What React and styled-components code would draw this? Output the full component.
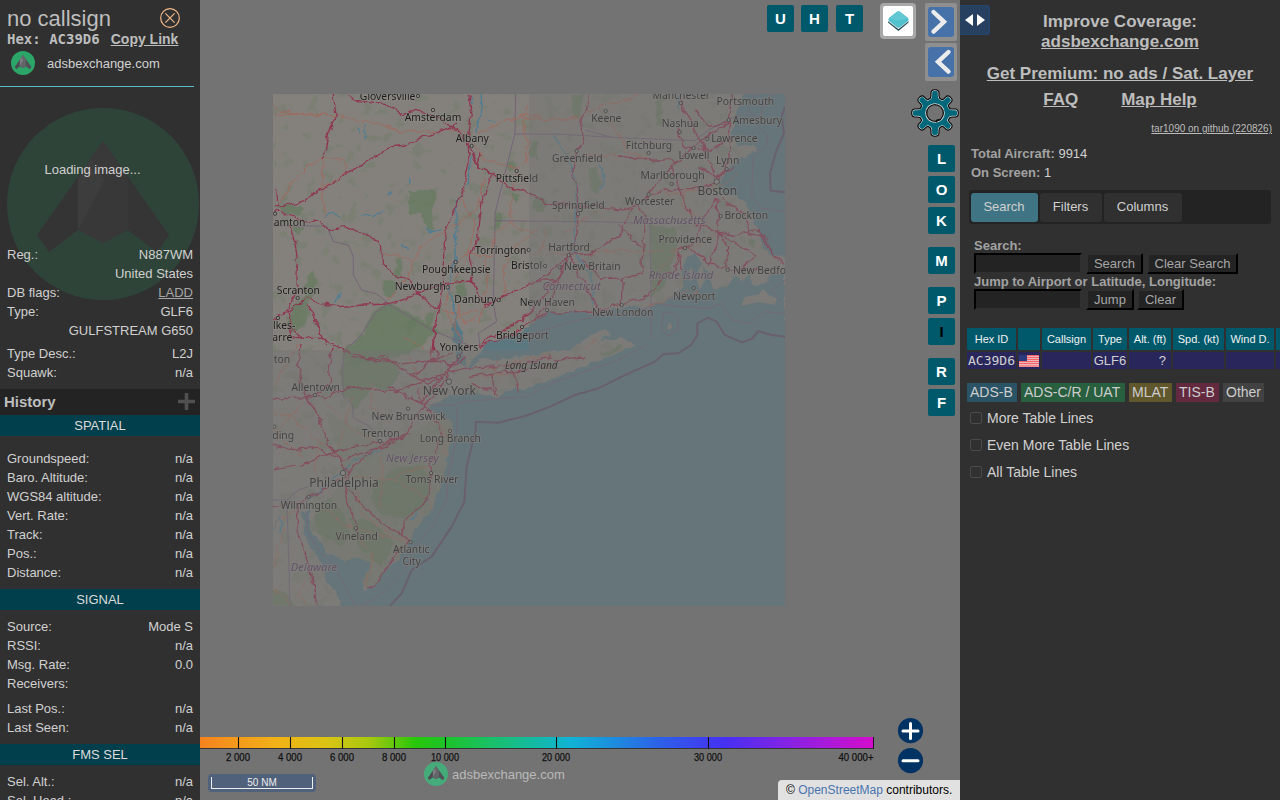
import React from 'react';
import styled, { createGlobalStyle } from 'styled-components';

const Global = createGlobalStyle`
  * { box-sizing: border-box; }
  html, body { margin: 0; padding: 0; overflow: hidden; background: #303030; }
  body { font: 13px/19px "Liberation Sans", Arial, sans-serif; color: #d0d0d0; }
`;

const Page = styled.div`
  display: grid;
  grid-template-columns: 200px 760px 320px;
  width: 1280px;
  height: 800px;
  overflow: hidden;
`;

/* ---------- selected aircraft panel ---------- */

const InfoPanel = styled.aside`
  background: #303030;
  height: 800px;
  overflow: hidden;
`;
const InfoHeader = styled.header`
  width: 194px;
  height: 87px;
  padding: 5px 0 0 7px;
  border-bottom: 1px solid #5cb8c2;
`;
const TitleRow = styled.div`
  display: flex;
  justify-content: space-between;
  height: 26px;
  padding-right: 14px;
  svg { margin-top: 3px; }
`;
const Callsign = styled.div`
  font-size: 22px;
  line-height: 27px;
  color: #bdbdbd;
`;
const HexRow = styled.div`
  display: flex;
  gap: 11px;
  height: 16px;
  line-height: 17px;
  font-weight: bold;
  font-size: 14px;
  color: #bdbdbd;
  white-space: pre;
`;
const Mono = styled.span`
  font-family: "DejaVu Sans Mono", monospace;
`;
const Link = styled.span`
  text-decoration: underline;
`;
const BrandRow = styled.div`
  display: flex;
  align-items: center;
  gap: 12px;
  padding: 4px 0 0 4px;
`;
const PhotoArea = styled.section`
  position: relative;
  height: 302px;
  padding-top: 73px;
`;
const PhotoBackdrop = styled.div`
  position: absolute;
  left: 7px;
  top: 21px;
  opacity: 0.17;
  svg { display: block; }
`;
const LoadingText = styled.div`
  position: relative;
  width: 185px;
  text-align: center;
  margin-bottom: 66px;
`;
const InfoRow = styled.div`
  position: relative;
  display: flex;
  justify-content: space-between;
  height: 19px;
  padding: 0 7px;
  margin-top: ${(p) => p.$gap || 0}px;
`;
const Muted = styled.span`
  color: #a6a6a6;
  text-decoration: underline;
`;
const HistoryBar = styled.div`
  display: flex;
  align-items: center;
  justify-content: space-between;
  height: 26px;
  padding: 0 5px 1px 4px;
  background: #232323;
  font-size: 15px;
  font-weight: bold;
  color: #bebebe;
`;
const Band = styled.div`
  height: 21px;
  line-height: 21px;
  text-align: center;
  background: #003f4b;
  color: #dcdcdc;
`;
const Rows = styled.div`
  padding: ${(p) => p.$top}px 0 7px;
`;

/* ---------- map ---------- */

const MapArea = styled.main`
  position: relative;
  background: #737373;
  overflow: hidden;
`;
const Tiles = styled.div`
  position: absolute;
  left: 73px;
  top: 94px;
  svg { display: block; }
`;
const TopButtons = styled.div`
  position: absolute;
  left: 567px;
  top: 5px;
  display: flex;
`;
const LetterButton = styled.div`
  width: 27px;
  height: 27px;
  border-radius: 2px;
  background: #00596b;
  color: ${(p) => (p.$dark ? '#000' : '#fff')};
  font: bold 15px/28px "Liberation Sans", Arial, sans-serif;
  text-align: center;
  margin-top: ${(p) => p.$gap || 0}px;
  margin-right: ${(p) => p.$after || 0}px;
`;
const SideButtons = styled.div`
  position: absolute;
  left: 728px;
  top: 145px;
`;
const LayerButton = styled.div`
  position: absolute;
  left: 680px;
  top: 3px;
  width: 36px;
  height: 36px;
  padding: 3px;
  border-radius: 4px;
  background: #a8a8a8;
  svg { display: block; background: #fff; border-radius: 2px; }
`;
const ArrowStack = styled.div`
  position: absolute;
  left: 725px;
  top: 3px;
  display: grid;
  gap: 2px;
`;
const ArrowFrame = styled.div`
  width: 32px;
  height: 38px;
  padding: 4px 3px;
  border-radius: 2px;
  background: #8f8f8f;
  svg { display: block; background: #4671a9; border-radius: 3px; }
`;
const Gear = styled.div`
  position: absolute;
  left: 711px;
  top: 89px;
`;
const AltitudeScale = styled.div`
  position: absolute;
  left: 0;
  top: 737px;
  svg { display: block; }
`;
const ScaleBox = styled.div`
  position: absolute;
  left: 8px;
  top: 774px;
  padding: 3px;
  height: 18px;
  border-radius: 4px;
  background: #50617c;
`;
const ScaleLine = styled.div`
  width: 102px;
  height: 12px;
  border: 1px solid #eee;
  border-top: 0;
  color: #eee;
  font-size: 10px;
  line-height: 11px;
  text-align: center;
`;
const Watermark = styled.div`
  position: absolute;
  left: 224px;
  top: 762px;
  display: flex;
  align-items: center;
  gap: 4px;
  color: #b9b9b9;
`;
const ZoomButtons = styled.div`
  position: absolute;
  left: 697px;
  top: 717px;
  svg { display: block; }
`;
const Attribution = styled.div`
  position: absolute;
  right: 0;
  bottom: 0;
  width: 182px;
  height: 20px;
  padding-left: 8px;
  border-radius: 4px 0 0 0;
  background: #e1e1e1;
  color: #000;
  font-size: 12px;
  line-height: 20px;
  white-space: nowrap;
  span { color: #4a74ad; }
`;

/* ---------- sidebar ---------- */

const Sidebar = styled.aside`
  position: relative;
  background: #303030;
  height: 800px;
  overflow: hidden;
`;
const ExpandButton = styled.div`
  position: absolute;
  left: 0;
  top: 5px;
  width: 30px;
  height: 30px;
  border: 1px solid #20476f;
  border-left: 0;
  border-radius: 0 3px 3px 0;
  background: #27405f;
  svg { display: block; }
`;
const Links = styled.div`
  padding-top: 12px;
  text-align: center;
  font: bold 17px/20px "Liberation Sans", Arial, sans-serif;
  color: #bdbdbd;
`;
const LinkLine = styled.div`
  display: flex;
  justify-content: center;
  gap: 43px;
  margin-top: ${(p) => p.$gap || 0}px;
`;
const Version = styled.div`
  height: 12px;
  margin-top: 13px;
  padding-right: 8px;
  text-align: right;
  font-size: 10px;
  line-height: 12px;
  color: #bdbdbd;
  text-decoration: underline;
`;
const Stats = styled.div`
  padding: 9px 0 0 11px;
  b { color: #a2a2a2; }
`;
const TabBar = styled.div`
  display: flex;
  gap: 2px;
  width: 302px;
  height: 34px;
  margin: 8px 0 0 9px;
  padding: 3px 2px 2px;
  border-radius: 3px;
  background: #232323;
`;
const Tab = styled.div`
  width: ${(p) => p.$w}px;
  padding-right: 1px;
  border-radius: 3px;
  background: ${(p) => (p.$active ? '#3f7484' : '#303030')};
  line-height: 28px;
  text-align: center;
`;
const Form = styled.div`
  padding: 12px 0 0 14px;
`;
const FieldLabel = styled.div`
  height: 17px;
  margin-top: ${(p) => p.$pull || 0}px;
  font-weight: bold;
  color: #a2a2a2;
  white-space: nowrap;
`;
const FieldRow = styled.div`
  display: flex;
  align-items: flex-start;
  height: 21px;
`;
const Field = styled.div`
  width: 108px;
  height: 21px;
  margin-right: 4px;
  border: 2px solid;
  border-color: #000 #303030 #303030 #000;
  background: #232323;
`;
const FormButton = styled.div`
  width: ${(p) => p.$w}px;
  height: 21px;
  margin-right: ${(p) => p.$after || 0}px;
  border: 2px solid;
  border-color: #303030 #000 #000 #303030;
  background: #232323;
  color: #a6a6a6;
  line-height: 18px;
  text-align: center;
`;
const Table = styled.div`
  display: grid;
  grid-template-columns: 49px 22px 49px 34px 42px 51px 48px 49px;
  grid-template-rows: 22px 17px;
  gap: 2px;
  width: 400px;
  margin: 18px 0 0 7px;
`;
const HeadCell = styled.div`
  background: #00596b;
  color: #f2f2f2;
  font-size: 11px;
  line-height: 22px;
  text-align: center;
  white-space: nowrap;
`;
const Cell = styled.div`
  background: #28265a;
  line-height: 18px;
  text-align: ${(p) => p.$align || 'center'};
  padding-right: ${(p) => (p.$align === 'right' ? 5 : 0)}px;
  svg { display: block; margin: 3px 0 0 1px; }
`;
const Legend = styled.div`
  display: flex;
  gap: 4px;
  margin: 14px 0 0 7px;
`;
const LegendChip = styled.div`
  width: ${(p) => p.$w}px;
  height: 19px;
  padding-left: 3px;
  background: ${(p) => p.$bg};
  color: #cdcdcd;
  font-size: 14px;
  line-height: 19px;
  white-space: nowrap;
`;
const Options = styled.div`
  padding: 3px 0 0 10px;
`;
const Option = styled.div`
  display: flex;
  gap: 5px;
  align-items: center;
  height: 27px;
  font-size: 14px;
`;
const Box = styled.span`
  width: 12px;
  height: 12px;
  margin-bottom: 2px;
  border: 1px solid #4a4a4a;
  border-radius: 2px;
`;

/* ---------- drawings ---------- */

function Logo({ size, bg = '#2ba568' }) {
  return (
    <svg width={size} height={size} viewBox="0 0 192 192">
      <circle cx="96" cy="96" r="96" fill={bg} />
      <path d="M96 33 30 127 42 144 71 122 96 135 121 122 150 144 162 127Z" fill="#4b4b50" />
      <path d="M96 33 71 70V122L96 135 121 122V70Z" fill="#636468" />
      <path d="M96 33 71 70V122L97 73Z" fill="#7c7d81" />
      <path d="M96 33 110 54 97 73 84 51Z" fill="#66676b" />
      <path d="M121 70V122L150 144 162 127Z" fill="#505055" />
    </svg>
  );
}

const WATER = [
  // ocean, sound and bays
  'M1432 12 1424 50 1408 100 1400 138 1420 165 1465 168 1475 185 1430 200 1400 225 1385 242 1372 265 1358 290 1392 312 1430 330 1462 370 1470 405 1485 430 1495 470 1515 494 1560 506 V12Z',
  'M1560 548 1528 548 1500 585 1470 592 1450 560 1432 575 1410 555 1390 588 1360 598 1338 590 1325 545 1310 520 1288 492 1266 500 1250 540 1255 590 1236 612 1200 634 1170 640 1150 656 1080 650 1010 668 930 668 850 668 820 690 790 714 730 738 690 752 655 770 638 795 618 815 606 840 650 806 690 815 730 803 780 797 850 785 915 782 960 745 1010 722 1040 728 1000 760 1040 745 1100 752 1110 766 1030 800 960 828 860 868 780 895 740 902 690 922 610 908 560 915 500 945 485 960 530 975 560 1000 562 1060 545 1110 535 1165 520 1210 500 1255 460 1305 430 1355 410 1395 370 1435 330 1475 300 1510 290 1500 300 1465 322 1415 290 1405 240 1415 190 1385 150 1335 130 1305 125 1265 110 1265 118 1325 130 1365 170 1415 180 1455 200 1495 230 1548 1560 1548Z',
  'M558 715 575 690 592 730 590 775 605 830 575 815 570 760Z',
];

const ISLANDS = [
  'M1428 648 1440 620 1480 614 1495 596 1510 614 1535 625 1530 645 1480 636Z',
  'M1205 715 1215 695 1222 712 1214 720Z',
  'M1300 540 1312 520 1320 570 1304 600 1296 570Z',
  'M1270 545 1280 530 1284 560 1276 575Z',
];

const GREENS = [
  'M432 300 503 300 515 325 505 335 505 400 500 418 480 418 478 385 458 370 432 370Z',
  'M372 640 430 665 520 720 470 760 440 790 400 800 300 815 240 830 230 780 285 740 330 660Z',
  'M355 570 385 575 395 600 370 625 352 605Z',
  'M85 645 120 620 135 680 110 710 80 730 62 690Z',
  'M125 560 145 540 158 575 140 610 128 640 115 600Z',
  'M35 345 115 348 110 375 50 370Z M80 410 115 415 100 440Z',
  'M690 370 708 375 708 415 690 415Z M740 300 765 320 755 340 740 325Z M735 215 750 225 740 245 725 240Z',
  'M925 12 950 12 945 90 925 80Z M970 240 990 230 1010 280 1000 310 975 300Z',
  'M1155 405 1235 410 1235 480 1200 590 1160 625 1155 520Z',
  'M1175 35 1190 20 1195 110 1175 100Z M1450 445 1472 450 1468 475 1448 465Z',
  'M800 150 820 155 815 210 795 200Z M810 320 850 330 840 370 800 355Z',
  'M575 590 605 580 600 620 575 625Z M395 510 412 505 408 560 390 550Z',
  'M228 830 300 800 395 812 400 870 370 900 320 890 270 960 245 925 228 915Z',
  'M330 1175 400 1130 470 1130 500 1180 480 1250 420 1290 350 1275 320 1230Z',
  'M420 700 455 680 450 720 430 735Z M480 680 510 660 500 700 480 710Z',
  'M140 1240 210 1230 260 1330 230 1370 160 1330Z M250 1280 330 1300 390 1360 350 1430 280 1370Z',
  'M24 1500 60 1510 90 1548 24 1548Z M1005 790 1060 765 1080 768 1020 800Z',
];

const MOTORWAYS = [
  'M205 12 213 80 192 130 175 210',
  'M247 14 270 30 330 40 370 45 410 75 450 58 500 70 547 100 575 120 600 150 625 190 640 230 680 250 740 295 780 302 812 320 850 345 890 340 935 350 1000 348 1060 360 1120 345 1150 320 1200 300 1280 298 1355 278',
  'M24 350 60 348 120 335 155 300 175 298 240 255 300 220 380 170 420 165 480 140 547 115 575 105',
  'M24 362 80 378 120 392 165 395 192 425 240 410 290 430 325 440 350 470 352 520 400 560 440 570 455 610 500 640 520 660 508 720 505 780 520 800',
  'M40 355 35 300 M75 410 90 460 100 530 98 600 65 660 75 710 110 745',
  'M610 12 620 50 608 130 612 220 590 310 560 380 540 430 535 520 530 620 515 680 505 740 500 800',
  'M620 190 640 230 M645 190 638 230 M680 250 650 340 640 430 620 500 620 575',
  'M24 690 60 670 130 620 160 640 220 650 300 645 365 642 430 625 455 612',
  'M125 640 150 690 172 745 180 765 M80 700 75 740 120 745 172 745 240 780 310 805 360 800 430 850 470 840',
  'M455 610 540 580 620 573 640 600 655 650 720 620 790 585 820 570 870 570 900 540 912 495 940 420 934 360 935 300 925 260 935 180 955 160 945 90 965 60 970 12',
  'M645 762 700 730 770 690 812 650 840 610 880 560 912 495',
  'M640 770 740 735 790 700 850 670 930 668 1010 660 1072 642 1150 620 1200 550 1230 545 1240 480 1270 470 1330 520 1400 540 1480 538',
  'M912 495 970 490 1060 440 1100 360 1150 315 1190 260 1240 210 1300 160 1340 130 1390 100 1400 12',
  'M1245 12 1250 50 1300 140 1330 200 1355 275 M1290 60 1330 110 1390 95',
  'M1072 642 1075 560 1130 555 1135 440 1140 380 1120 345 M1060 400 1135 480',
  'M1220 230 1250 320 1290 400 1360 425 1400 435 1480 420 1530 500 1560 523',
  'M1355 330 1310 390 1300 450 1240 480 1245 540 M1355 330 1365 430 1330 530 M1365 430 1470 495 1430 540 M1385 535 1388 470 1365 430 M1370 325 1435 370 1450 430 1500 440 1530 500',
  'M915 500 945 560 1000 650 M812 570 880 530 912 495 M910 500 880 570 850 640 805 690',
  'M950 510 1010 565 1075 565 M1060 198 1145 210 1200 210 1240 215',
  'M1240 100 1250 170 1340 180 1390 150 M1300 230 1355 260 1410 230 M1360 275 1395 200 1390 100',
  'M24 925 125 920 180 925 245 890 390 905 450 880 540 850 600 835 700 830 780 820 860 800',
  'M205 770 190 820 195 880 160 910 125 920 160 980 200 1080 220 1100 250 1150',
  'M105 765 100 830 110 880 125 920',
  'M24 1065 90 1080 160 1075 230 1110 290 1090 360 1070 420 1040 460 970 540 870 580 800 610 765',
  'M24 1140 110 1125 200 1090 260 1070 340 1060 440 1030',
  'M24 1250 100 1240 160 1210 240 1160 300 1100 360 1060 410 1040',
  'M100 1250 95 1320 120 1390 140 1450 155 1548',
  'M250 1200 300 1250 350 1300 430 1350 M430 1350 400 1380 370 1430 330 1480 305 1500',
  'M410 1340 420 1290 480 1240 500 1180 495 1120 530 1040 520 1000 470 940 460 900',
  'M260 800 340 810 430 820 520 810 560 830 M440 860 500 810 560 790 M430 850 490 880 530 860',
  'M370 890 430 920 470 940 540 850 600 800 M250 1160 240 1220 270 1290 275 1330',
  'M605 860 680 850 780 840 870 825 M680 850 690 915 M740 830 760 905 M620 880 700 910 M860 810 960 800',
];

const ROADS = [
  'M24 70 130 70 220 80 280 90 340 100 410 128 530 125',
  'M24 45 40 60 120 75 210 78 M40 345 80 280 130 230 175 205 240 210 250 245 160 300',
  'M175 210 170 300 182 370 170 390 M547 115 600 130 640 180 660 210 760 235 800 180',
  'M355 490 440 508 480 465 545 420 590 395 640 350 660 260',
  'M640 130 720 95 780 75 860 90 940 80 1000 50 1080 30 1130 12',
  'M760 240 735 330 740 400 690 430 680 500 600 490 540 540 M740 400 800 430 830 400',
  'M610 230 590 330 630 400 610 500 575 560 540 640',
  'M720 620 715 540 740 470 800 440 M660 500 665 600 645 700 M370 630 400 590 430 560 440 510',
  'M780 215 790 150 770 100 790 40 M780 85 870 90 945 85',
  'M955 195 1050 198 1150 205 M1000 50 1060 130 1080 180 1145 205',
  'M850 490 930 495 1060 480 1135 485 1235 480 M1235 480 1280 470 1360 430',
  'M1145 300 1230 310 1310 300 1390 280 1420 250 M1260 300 1250 350 1330 400',
  'M1150 645 1210 630 1270 600 1300 610 M840 420 830 480 800 500',
  'M100 765 60 830 24 900 M24 970 80 980 160 1050 240 1110 M24 1010 60 1060 120 1100',
  'M120 930 60 1000 30 1050 M180 930 250 1010 320 1050 350 1080',
  'M24 1310 100 1250 M60 1310 40 1370 24 1440 M160 1060 150 1150 200 1220',
  'M260 1160 390 1170 430 1140 500 1130 M390 1170 480 1220 500 1255 M350 1060 350 1170 345 1250',
  'M160 1240 250 1310 350 1335 430 1355 M270 1190 300 1280 390 1340',
  'M320 880 320 950 380 1000 M430 800 460 860 480 940 M540 640 560 700 600 780',
  'M580 660 600 700 640 680 M580 640 570 720 590 760 M530 660 600 670 640 660',
  'M660 840 780 810 860 790 M640 860 760 850 M700 800 690 850 M840 790 850 850',
  'M415 740 470 770 520 820 M120 1550 100 1500 130 1470 M510 980 545 1040 540 1100',
  'M275 1330 325 1410 300 1500 M24 1500 60 1520 80 1548 M900 430 940 400 1000 360',
  'M960 780 990 745 M810 840 800 790 M1235 480 1190 540 M260 920 240 1010 215 1080',
];

const RIVERS = [
  'M622 200 612 270 575 340 572 430 570 510 552 600 575 690 595 775',
  'M180 380 200 365 225 378 M290 380 330 378 355 362 M480 415 500 425 525 412',
  'M305 105 300 145 M275 110 285 130 M1010 225 1015 290 M370 315 375 300 M430 265 433 280',
  'M410 462 435 480 M210 640 230 610 M1005 225 1020 260 1010 300 M620 25 625 40 M645 12 650 60 635 130',
  'M350 1080 270 1110 230 1150 180 1190 130 1230 125 1290 M24 1320 50 1280 45 1330',
  'M665 90 685 100 M1235 12 1240 60 M450 1270 490 1230 M440 1290 460 1270 M870 130 930 250 930 400 920 480 980 560 985 650',
];

const BORDERS = [
  'M24 408 185 408 205 455 250 465 265 500 265 555 290 600 335 612 370 640 330 670 285 740 240 780 232 830 235 920 262 945 265 985 315 1010 345 1060',
  'M370 642 500 720 610 765',
  'M752 12 750 130 725 230 690 370 690 392 685 640 695 695 640 730 645 765',
  'M750 132 870 132 960 137 1040 142 1290 152 1330 120 1390 90 1430 70',
  'M690 392 830 394 1000 395 1155 400 1270 398 M1155 400 1158 640 1158 745 M1040 142 960 120',
  'M24 1230 66 1230 100 1200 130 1190 M66 1230 75 1548',
  'M125 1265 128 1325 160 1380 210 1430 270 1548',
  'M780 740 900 700 1010 675 1110 670 1170 640 1250 650 1330 655 1370 640 1400 690 1450 700 1500 665 1560 670',
  'M1190 700 1195 670 1215 665 1240 680 1238 720 1210 738 1190 720Z',
  'M490 945 560 945 600 935 780 920 860 880 960 845 1060 810 1145 765',
  'M578 950 575 1050 550 1150 545 1230 500 1310 450 1370 420 1440 350 1510 320 1530 290 1548',
  'M1440 70 1510 140 1505 165 1465 200 1460 320 1490 355 1560 364 M1560 570 1520 600 1550 640',
  'M1470 12 1450 60 1480 90 1500 40 1520 12',
];

const SEA_LIMITS = [
  'M1560 50 1550 80 1557 130 1535 180 1515 250 1517 302 1560 307',
  'M375 1548 410 1510 440 1440 500 1400 560 1310 598 1235 605 1130 632 1020 632 995 700 998 780 978 850 952 930 915 1000 895 1080 855 1170 815 1195 792 1240 790 1278 765 1297 735 1297 700 1330 683 1355 695 1380 735 1430 757 1460 747 1480 723 1520 735 1560 740',
];

const PLACES = [
  ['Gloversville', 366, 29], ['Amsterdam', 502, 94], ['Albany', 620, 156], ['Pittsfield', 754, 277],
  ['amton', 24, 407, 's'], ['Torrington', 705, 492], ['Poughkeepsie', 572, 550], ['Newburgh', 464, 601],
  ['Scranton', 98, 612], ['Danbury', 629, 640], ['lkes-', 22, 717, 's'], ['arre', 20, 752, 's'],
  ['Bridgeport', 770, 748], ['Yonkers', 580, 784], ['Keene', 1022, 95], ['Manchester', 1247, 27],
  ['Portsmouth', 1439, 44], ['Nashua', 1244, 112], ['Amesbury', 1475, 102], ['Lawrence', 1406, 157],
  ['Fitchburg', 1150, 178], ['Lowell', 1285, 207], ['Greenfield', 935, 217], ['Lynn', 1386, 223],
  ['Marlborough', 1221, 268], ['Worcester', 1152, 344], ['Springfield', 938, 358],
  ['Brockton', 1442, 387], ['Providence', 1259, 460], ['Hartford', 910, 482],
  ['New Britain', 980, 541], ['Bristol', 783, 537], ['New Bedford', 1402, 551, 's'],
  ['Newport', 1286, 629], ['New Haven', 845, 647], ['New London', 1071, 678],
  ['ton', 24, 818, 's'], ['Allentown', 150, 903], ['New Brunswick', 429, 990],
  ['Long Branch', 554, 1057], ['Trenton', 345, 1041], ['ding', 20, 1046, 's'],
  ['Toms River', 499, 1180], ['Wilmington', 130, 1257], ['Vineland', 273, 1349],
  ['Atlantic', 437, 1390], ['City', 438, 1426],
];
const CITIES = [['Boston', 1355, 315], ['New York', 551, 916], ['Philadelphia', 235, 1190]];
const STATES = [
  ['Massachusetts', 1211, 402], ['Rhode Island', 1246, 566], ['Connecticut', 918, 601],
  ['New Jersey', 440, 1115], ['Delaware', 145, 1444],
];
const DOTS = [
  [459, 18], [504, 60], [620, 168], [755, 243], [30, 371], [791, 480], [572, 516], [548, 592],
  [98, 624], [701, 630], [39, 684], [771, 711], [581, 799], [1022, 63], [1247, 39], [1244, 126],
  [1391, 90], [1327, 147], [1151, 189], [1286, 174], [935, 183], [1385, 237], [1220, 282],
  [1151, 313], [939, 372], [1367, 378], [1260, 474], [911, 495], [884, 531], [840, 528],
  [1388, 540], [1286, 594], [846, 660], [1070, 645], [150, 915], [429, 956], [555, 1023],
  [345, 1053], [498, 1149], [131, 1221], [272, 1314], [437, 1356], [28, 1010],
];

const MapText = styled.text`
  font-family: "Noto Sans", sans-serif;
  font-size: ${(p) => p.$size || 31}px;
  font-style: ${(p) => (p.$italic ? 'italic' : 'normal')};
  fill: ${(p) => p.$fill || '#1c1c1c'};
  stroke: #8e8b86;
  stroke-opacity: 0.75;
  stroke-width: 5px;
  stroke-linejoin: round;
  paint-order: stroke;
`;

function MapTiles() {
  return (
    <Tiles>
      <svg width="512" height="512" viewBox="24 12 1536 1536" fill="none" strokeLinejoin="round">
        <defs>
          <filter id="rough" x="0" y="0" width="100%" height="100%" filterUnits="objectBoundingBox" colorInterpolationFilters="sRGB">
            <feTurbulence type="fractalNoise" baseFrequency="0.035" numOctaves="3" seed="4" />
            <feDisplacementMap in="SourceGraphic" scale="22" xChannelSelector="R" yChannelSelector="G" />
          </filter>
          <filter id="woods" x="0" y="0" width="100%" height="100%" colorInterpolationFilters="sRGB">
            <feTurbulence type="fractalNoise" baseFrequency="0.025" numOctaves="4" seed="11" />
            <feColorMatrix values="0 0 0 0 .41  0 0 0 0 .48  0 0 0 0 .38  9 0 0 0 -5.4" />
          </filter>
        </defs>
        <rect x="24" y="12" width="1536" height="1536" fill="#84817c" />
        <rect x="24" y="12" width="1536" height="1536" filter="url(#woods)" opacity="0.3" />
        <path d="M180 960 345 1060 430 1030 560 960V1300L300 1500 130 1300 240 1160Z" fill="#6f7d68" opacity="0.4" filter="url(#rough)" />
        <g filter="url(#rough)">
          {GREENS.map((d) => <path key={d} d={d} fill="#687b60" opacity="0.8" />)}
        </g>
        <g filter="url(#rough)" fill="#5d7780">
          {WATER.map((d) => <path key={d} d={d} />)}
        </g>
        <path d="M700 1012H1560V1548H480L700 1300Z M1500 12H1560V490H1520Z M1350 740H1560V1100H1350Z M300 1530H600V1548H240Z" fill="#5d7780" />
        {ISLANDS.map((d) => <path key={d} d={d} fill="#84817c" />)}
        <g stroke="#4d7c94" strokeWidth="4" filter="url(#rough)">
          {RIVERS.map((d) => <path key={d} d={d} />)}
        </g>
        <g stroke="#746478" strokeWidth="3">
          {BORDERS.map((d) => <path key={d} d={d} />)}
        </g>
        <g stroke="#62546c" strokeWidth="6">
          {SEA_LIMITS.map((d) => <path key={d} d={d} />)}
        </g>
        <g stroke="#a2685b" strokeWidth="2.6" filter="url(#rough)">
          {ROADS.map((d) => <path key={d} d={d} />)}
        </g>
        <g stroke="#8f3550" strokeWidth="3.8" filter="url(#rough)">
          {MOTORWAYS.map((d) => <path key={d} d={d} />)}
        </g>
        <g stroke="#2d2d2d" strokeWidth="2.5" fill="#918e89">
          {DOTS.map(([x, y]) => <circle key={`${x}-${y}`} cx={x} cy={y} r="5" />)}
          <circle cx="1355" cy="275" r="8" />
          <circle cx="552" cy="875" r="8" />
          <circle cx="234" cy="1149" r="8" />
        </g>
        <g transform="translate(2 0)">
          {STATES.map(([t, x, y]) => (
            <MapText key={t} x={x} y={y} textAnchor="middle" $italic $size={33.5} $fill="#553a5e">{t}</MapText>
          ))}
          {PLACES.map(([t, x, y, a]) => (
            <MapText key={t} x={x} y={y} textAnchor={a ? 'start' : 'middle'}>{t}</MapText>
          ))}
          {CITIES.map(([t, x, y]) => (
            <MapText key={t} x={x} y={y} textAnchor="middle" $size={36}>{t}</MapText>
          ))}
          <MapText x="797" y="838" textAnchor="middle" $italic $size={30.5} $fill="#000">Long Island</MapText>
        </g>
        <path d="M792 12H1560V1548H24V780H792Z" fill="#737373" fillOpacity="0.42" />
      </svg>
    </Tiles>
  );
}

const TICKS = [
  ['2 000', 38, 24], ['4 000', 90, 24], ['6 000', 142, 24], ['8 000', 194, 24],
  ['10 000', 245, 28], ['20 000', 356, 28], ['30 000', 508, 28],
];

const TickText = styled.text`
  font: 11px "Liberation Sans Narrow", "Liberation Sans", sans-serif;
  fill: #111;
  stroke: #111;
  stroke-width: 0.25px;
`;

function Altitudes() {
  return (
    <AltitudeScale>
      <svg width="680" height="26">
        <defs>
          <linearGradient id="alt">
            <stop offset="0" stopColor="#f5831f" />
            <stop offset=".115" stopColor="#f2b217" />
            <stop offset=".19" stopColor="#d9c414" />
            <stop offset=".25" stopColor="#a9c80f" />
            <stop offset=".32" stopColor="#27c60b" />
            <stop offset=".37" stopColor="#1dc32d" />
            <stop offset=".45" stopColor="#18bf78" />
            <stop offset=".55" stopColor="#10b3d5" />
            <stop offset=".6" stopColor="#1a96dc" />
            <stop offset=".68" stopColor="#2c62e8" />
            <stop offset=".78" stopColor="#4630f2" />
            <stop offset=".88" stopColor="#8a22e3" />
            <stop offset="1" stopColor="#d40dcc" />
          </linearGradient>
        </defs>
        <rect width="674" height="12" fill="#222" fillOpacity=".75" />
        <rect width="673" height="11" fill="url(#alt)" />
        <path d="M673.5 0V12" stroke="#201020" />
        {TICKS.map(([t, x, w]) => (
          <g key={t}>
            <path d={`M${x + 0.5} 0V12`} stroke="#111" strokeWidth="1.1" />
            <TickText x={x - w / 2} y="24" textLength={w} lengthAdjust="spacingAndGlyphs">{t}</TickText>
          </g>
        ))}
        <TickText x="638.5" y="24" textLength="35" lengthAdjust="spacingAndGlyphs">40 000+</TickText>
      </svg>
    </AltitudeScale>
  );
}

const TOOTH = 'M-5 -13Q-2.9 -15 -2.9 -17.5V-20.5Q-2.9 -22.6 0 -22.6T2.9 -20.5V-17.5Q2.9 -15 5 -13Z';

function GearTeeth({ fill, stroke, width }) {
  return (
    <g fill={fill} stroke={stroke} strokeWidth={width} strokeLinejoin="round">
      {[0, 45, 90, 135, 180, 225, 270, 315].map((a) => (
        <path key={a} d={TOOTH} transform={`rotate(${a}) scale(${a % 90 ? 0.93 : 0.98})`} />
      ))}
      <circle r="14" />
    </g>
  );
}

function Info({ rows }) {
  return rows.map(([label, value, gap], i) => (
    <InfoRow key={i} $gap={gap}>
      <span>{label}</span>
      {value === 'LADD' ? <Muted>LADD</Muted> : <span>{value}</span>}
    </InfoRow>
  ));
}

export default function App() {
  return (
    <>
      <Global />
      <Page>
        <InfoPanel>
          <InfoHeader>
            <TitleRow>
              <Callsign>no callsign</Callsign>
              <svg width="20" height="20" viewBox="0 0 20 20" fill="none" stroke="#f0b888" strokeWidth="1.2">
                <circle cx="10" cy="10" r="9.3" />
                <path d="M5.4 5.4 14.6 14.6M14.6 5.4 5.4 14.6" />
              </svg>
            </TitleRow>
            <HexRow>
              <Mono>Hex: AC39D6</Mono>
              <Link>Copy Link</Link>
            </HexRow>
            <BrandRow>
              <Logo size={24} />
              <span>adsbexchange.com</span>
            </BrandRow>
          </InfoHeader>
          <PhotoArea>
            <PhotoBackdrop><Logo size={192} /></PhotoBackdrop>
            <LoadingText>Loading image...</LoadingText>
            <Info rows={[
              ['Reg.:', 'N887WM'], ['', 'United States'], ['DB flags:', 'LADD'], ['Type:', 'GLF6'],
              ['', 'GULFSTREAM G650'], ['Type Desc.:', 'L2J', 4], ['Squawk:', 'n/a'],
            ]} />
          </PhotoArea>
          <HistoryBar>
            <span>History</span>
            <svg width="17" height="17"><path d="M8.5 0V17M0 8.5H17" stroke="#505050" strokeWidth="3.6" /></svg>
          </HistoryBar>
          <Band>SPATIAL</Band>
          <Rows $top={13}>
            <Info rows={[
              ['Groundspeed:', 'n/a'], ['Baro. Altitude:', 'n/a'], ['WGS84 altitude:', 'n/a'],
              ['Vert. Rate:', 'n/a'], ['Track:', 'n/a'], ['Pos.:', 'n/a'], ['Distance:', 'n/a'],
            ]} />
          </Rows>
          <Band>SIGNAL</Band>
          <Rows $top={7}>
            <Info rows={[
              ['Source:', 'Mode S'], ['RSSI:', 'n/a'], ['Msg. Rate:', '0.0'], ['Receivers:', ''],
              ['Last Pos.:', 'n/a', 6], ['Last Seen:', 'n/a'],
            ]} />
          </Rows>
          <Band>FMS SEL</Band>
          <Rows $top={7}>
            <Info rows={[['Sel. Alt.:', 'n/a'], ['Sel. Head.:', 'n/a']]} />
          </Rows>
        </InfoPanel>

        <MapArea>
          <MapTiles />
          <TopButtons>
            <LetterButton $after={7}>U</LetterButton>
            <LetterButton $after={8}>H</LetterButton>
            <LetterButton>T</LetterButton>
          </TopButtons>
          <LayerButton>
            <svg width="30" height="30" viewBox="0 0 30 30">
              <path d="M5 16.5 15.5 25 25.5 16.5V15L15 8 5 15Z" fill="#1c4650" />
              <path d="M5 15.3 15.5 23.2 25.5 15.3V14L15 7 5 14Z" fill="#eee" />
              <path d="M6 12 14 5.8Q15.5 4.7 17 5.8L25 12Q26.4 13.7 25 15L17 21.2Q15.5 22.2 14 21.2L6 15Q4.8 13.5 6 12Z" fill="#50c1cd" />
              <path d="M6 12 14 5.8Q15.5 4.7 17 5.8L25 12 15 15Z" fill="#62c8d3" />
            </svg>
          </LayerButton>
          <ArrowStack>
            <ArrowFrame>
              <svg width="26" height="30" fill="none" stroke="#ececec" strokeWidth="4.4" strokeLinecap="round">
                <path d="M5.5 5 16 14.8 5.5 24.6" />
              </svg>
            </ArrowFrame>
            <ArrowFrame>
              <svg width="26" height="30" fill="none" stroke="#ececec" strokeWidth="4.4" strokeLinecap="round">
                <path d="M20.5 5 10 14.8 20.5 24.6" />
              </svg>
            </ArrowFrame>
          </ArrowStack>
          <Gear>
            <svg width="48" height="48" viewBox="-24 -24 48 48">
              <GearTeeth fill="#000" stroke="#000" width={3.4} />
              <GearTeeth fill="#ddd" stroke="#ddd" width={1.2} />
              <GearTeeth fill="#00687a" stroke="#00687a" width={-0} />
              <circle r="9.8" fill="#dcdcdc" />
              <circle r="9" fill="#111" />
              <circle r="7.7" fill="#737373" />
              <path d="M1 9 2 7.3 5.5 6.4" fill="none" stroke="#111" strokeWidth="1.6" />
            </svg>
          </Gear>
          <SideButtons>
            <LetterButton>L</LetterButton>
            <LetterButton $gap={4}>O</LetterButton>
            <LetterButton $gap={4}>K</LetterButton>
            <LetterButton $gap={13}>M</LetterButton>
            <LetterButton $gap={13}>P</LetterButton>
            <LetterButton $gap={4} $dark>I</LetterButton>
            <LetterButton $gap={13}>R</LetterButton>
            <LetterButton $gap={4}>F</LetterButton>
          </SideButtons>
          <Altitudes />
          <Watermark>
            <Logo size={24} bg="#45ab7a" />
            <span>adsbexchange.com</span>
          </Watermark>
          <ScaleBox><ScaleLine>50 NM</ScaleLine></ScaleBox>
          <ZoomButtons>
            <svg width="27" height="58" viewBox="0 0 27 58" stroke="#fff" strokeWidth="3" strokeLinecap="round">
              <circle cx="13.5" cy="13.7" r="12.6" fill="#003263" stroke="none" />
              <circle cx="13.5" cy="43.7" r="12.6" fill="#003263" stroke="none" />
              <path d="M6 14H21M13.5 6.5V21.5M6 43.7H21" />
            </svg>
          </ZoomButtons>
          <Attribution>© <span>OpenStreetMap</span> contributors.</Attribution>
        </MapArea>

        <Sidebar>
          <ExpandButton>
            <svg width="30" height="28" fill="#fff"><path d="M5 14 13 8V20ZM25 14 17 8V20Z" /></svg>
          </ExpandButton>
          <Links>
            <LinkLine>Improve Coverage:</LinkLine>
            <LinkLine><Link>adsbexchange.com</Link></LinkLine>
            <LinkLine $gap={12}><Link>Get Premium: no ads / Sat. Layer</Link></LinkLine>
            <LinkLine $gap={6}><Link>FAQ</Link><Link>Map Help</Link></LinkLine>
          </Links>
          <Version>tar1090 on github (220826)</Version>
          <Stats>
            <div><b>Total Aircraft:</b> 9914</div>
            <div><b>On Screen:</b> 1</div>
          </Stats>
          <TabBar>
            <Tab $w={67} $active>Search</Tab>
            <Tab $w={62}>Filters</Tab>
            <Tab $w={78}>Columns</Tab>
          </TabBar>
          <Form>
            <FieldLabel>Search:</FieldLabel>
            <FieldRow>
              <Field />
              <FormButton $w={57} $after={4}>Search</FormButton>
              <FormButton $w={91}>Clear Search</FormButton>
            </FieldRow>
            <FieldLabel $pull={-2}>Jump to Airport or Latitude, Longitude:</FieldLabel>
            <FieldRow>
              <Field />
              <FormButton $w={48} $after={3}>Jump</FormButton>
              <FormButton $w={47}>Clear</FormButton>
            </FieldRow>
          </Form>
          <Table>
            {['Hex ID', '', 'Callsign', 'Type', 'Alt. (ft)', 'Spd. (kt)', 'Wind D.', ''].map((h, i) => (
              <HeadCell key={i}>{h}</HeadCell>
            ))}
            <Cell><Mono>AC39D6</Mono></Cell>
            <Cell>
              <svg width="20" height="12">
                <rect width="20" height="12" fill="#f3b5b8" />
                <path d="M0 .5H20M0 2.5H20M0 4.5H20M0 6.5H20M0 8.5H20M0 11H20" stroke="#ee6469" />
                <rect width="8" height="6" fill="#2c3a7c" />
              </svg>
            </Cell>
            <Cell />
            <Cell>GLF6</Cell>
            <Cell $align="right">?</Cell>
            <Cell />
            <Cell />
            <Cell />
          </Table>
          <Legend>
            <LegendChip $w={50} $bg="#2a5465">ADS-B</LegendChip>
            <LegendChip $w={104} $bg="#285f3f">ADS-C/R / UAT</LegendChip>
            <LegendChip $w={43} $bg="#60572d">MLAT</LegendChip>
            <LegendChip $w={43} $bg="#62293f">TIS-B</LegendChip>
            <LegendChip $w={41} $bg="#424242">Other</LegendChip>
          </Legend>
          <Options>
            <Option><Box />More Table Lines</Option>
            <Option><Box />Even More Table Lines</Option>
            <Option><Box />All Table Lines</Option>
          </Options>
        </Sidebar>
      </Page>
    </>
  );
}
